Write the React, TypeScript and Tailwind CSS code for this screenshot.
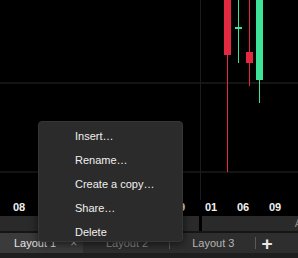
const RED = "#e3293f";
const GREEN = "#3de39a";

const menuItems = ["Insert…", "Rename…", "Create a copy…", "Share…", "Delete"];

const axisLabels = [
  { text: "08", left: 13 },
  { text: "09", left: 173 },
  { text: "01", left: 205 },
  { text: "06", left: 237 },
  { text: "09", left: 269 },
];

const Chart = () => (
  <svg width="298" height="200" className="block">
    <rect x="0" y="82" width="298" height="2" fill="#141414" />
    <rect x="0" y="171" width="298" height="2" fill="#141414" />
    <rect x="200" y="0" width="1" height="200" fill="#1c1c1c" />
    {/* red candle */}
    <rect x="227" y="55" width="1" height="117" fill={RED} />
    <rect x="224" y="0" width="7" height="55" fill={RED} />
    {/* doji */}
    <rect x="238" y="0" width="1" height="63" fill={GREEN} />
    <rect x="235" y="27" width="7" height="2" fill={GREEN} />
    {/* small red */}
    <rect x="249" y="0" width="1" height="86" fill={RED} />
    <rect x="246" y="52" width="7" height="11" fill={RED} />
    {/* green */}
    <rect x="259" y="80" width="1" height="23" fill={GREEN} />
    <rect x="256" y="0" width="7" height="80" fill={GREEN} />
  </svg>
);

export default function App() {
  return (
    <div className="relative w-[298px] h-[258px] overflow-hidden bg-black flex flex-col font-['Liberation_Sans',Arial,sans-serif]">
      <div className="h-[216px] flex flex-col">
        <Chart />
        <div className="relative h-[16px]">
          {axisLabels.map((l, i) => (
            <span
              key={i}
              className="absolute top-[1px] text-[11px] font-bold leading-[12px] text-[#f0f0f0]"
              style={{ left: l.left }}
            >
              {l.text}
            </span>
          ))}
        </div>
      </div>
      <div className="h-[15px] flex gap-[3px]">
        <div className="w-[199px] bg-[#2a2a2a]" />
        <div className="flex-1 bg-[#2a2a2a] flex justify-end items-center overflow-hidden">
          <span className="text-[11px] text-[#8a8a8a] leading-none mr-[-4px]">A</span>
        </div>
      </div>
      <div className="h-[2px] bg-[#151515]" />
      <div className="h-[20px] bg-[#2e2e2e] flex items-center text-[11px] leading-none">
        <div className="w-[83px] h-full bg-[#3b3b3b] flex items-center pl-[14px] text-[#e6e6e6]">
          <span>Layout 1</span>
          <span className="ml-[14px] text-[12px] text-[#bdbdbd]">×</span>
        </div>
        <span className="ml-[23px] text-[#8e8e8e]">Layout 2</span>
        <div className="ml-[21px] w-[1px] h-[12px] bg-[#5a5a5a]" />
        <span className="ml-[22px] text-[#b5b5b5]">Layout 3</span>
        <div className="ml-[21px] w-[1px] h-[12px] bg-[#5a5a5a]" />
        <span className="ml-[5px] text-[19px] font-bold text-[#e8e8e8] leading-none">+</span>
      </div>
      <div className="flex-1 bg-[#1e1e1e]" />

      <div className="absolute left-[38px] top-[121px] w-[145px] h-[121px] rounded-[4px] bg-[#2b2b2b] border border-[#363636] shadow-[0_2px_8px_rgba(0,0,0,0.6)] pt-[2px]">
        {menuItems.map((item) => (
          <div key={item} className="h-[24px] flex items-center pl-[36px] text-[11px] text-[#f0f0f0]">
            {item}
          </div>
        ))}
      </div>
    </div>
  );
}
